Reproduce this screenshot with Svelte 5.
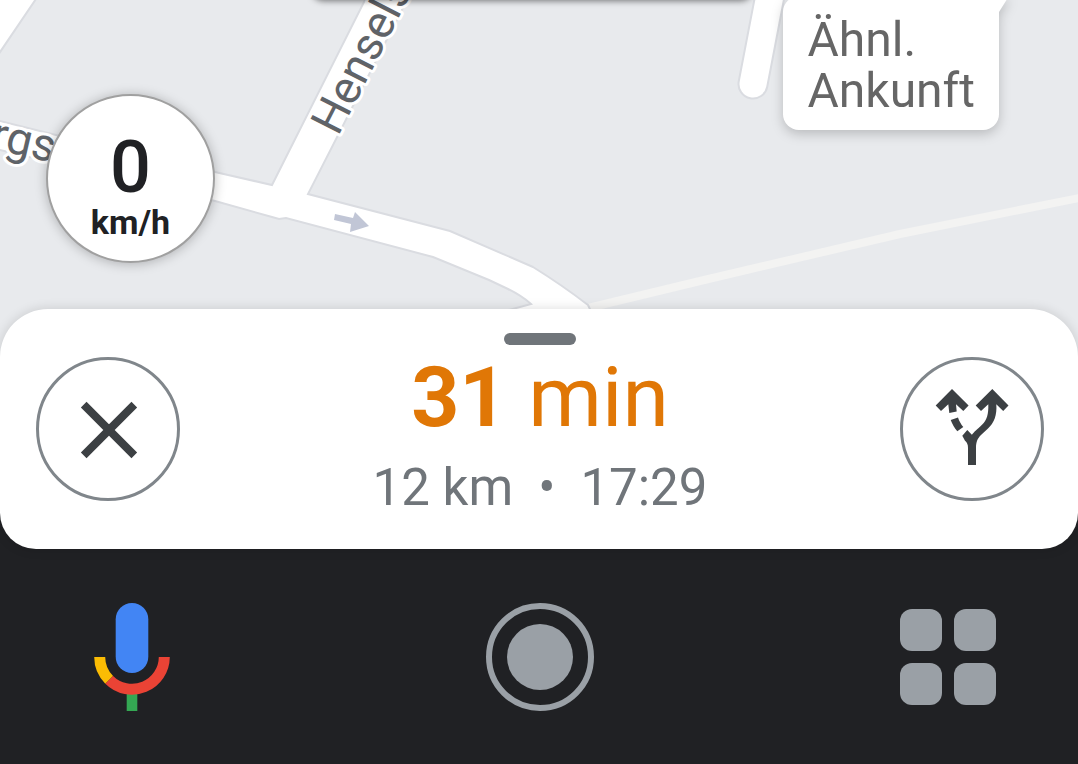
<script>
  const speed = { value: 0, unit: 'km/h' };
  const trip = { minutes: 31, distance: '12 km', arrival: '17:29' };
  const tiles = [[6, 6], [60, 6], [6, 60], [60, 60]];
</script>

<main class="screen">
  <section class="map" aria-label="Map">
    <svg class="streets" viewBox="0 0 1078 369" preserveAspectRatio="xMidYMax slice">
      <path class="path" d="M584 309 L700 281 L900 234 L1084 197" />
      <path class="road" d="M-4 -4 H38 L-4 58 Z" />
      <path
        class="road"
        d="M-4 120 L60 136 L215 172 L272 185 L367 -4 H409 L308 194 L450 231 L533 267 Q562 285 588 305 L600 330 H505 V311 L531 304 Q522 296 508 289 L489 280 L433 257 L286 218 L279 219 L272 217 L215 201 L-4 149 Z"
      />
      <path class="casing" d="M771 -10 L753 84" />
      <path class="lane" d="M771 -10 L753 84" />
      <path class="oneway" d="M335 214 L353 218 L355 212 L369 226 L350 232 L351 224 L334 220 Z" />
      <text class="street" transform="translate(338 137) rotate(-63)">Hensels</text>
      <text class="street" transform="translate(-11 148) rotate(13)">rgs</text>
    </svg>

    <div class="banner"></div>

    <div class="callout">
      <svg class="tail" viewBox="0 0 30 30"><path d="M0 0 H20 L10 16 V30 H0 Z" /></svg>
      <span>Ähnl.</span>
      <span>Ankunft</span>
    </div>

    <div class="speed">
      <span class="value">{speed.value}</span>
      <span class="unit">{speed.unit}</span>
    </div>
  </section>

  <section class="sheet">
    <button class="round" aria-label="Close">
      <svg viewBox="3 3 138 138">
        <path d="M47.7 47.7 L98.3 98.3 M98.3 47.7 L47.7 98.3" fill="none" stroke="#3c4043" stroke-width="8" />
      </svg>
    </button>

    <div class="trip">
      <div class="handle"></div>
      <div class="duration"><strong>{trip.minutes}</strong> min</div>
      <div class="details">
        <span>{trip.distance}</span><span class="dot">•</span><span>{trip.arrival}</span>
      </div>
    </div>

    <button class="round" aria-label="Alternative routes">
      <svg viewBox="3 3 138 138" fill="#3c4043">
        <path
          d="M92.3 32 L108.5 48.6 L103.2 54 L96.3 47.2 C97.2 58 94 66 88 71.5 L81 78 C77.5 81.5 76 85 76 91 V108 H68 V91 C68 87.5 67 85.5 65 83.8 L62.3 78.7 L67.3 73 L71.9 77.7 C74 75 77 72.5 82 67.8 C87 63 88.6 57 88.3 47.2 L81 54 L75.7 48.6 Z"
        />
        <path d="M52 32 L68.6 48.6 L63.3 54 L56 47.2 L56.7 54.6 L49.3 56 L48.3 47.2 L41 54 L35.7 48.6 Z" />
        <path d="M50.7 63 L58 60.4 C59.2 64 61 67.2 63.3 70 L57.3 74.2 C54.5 71 52.3 67.3 50.7 63 Z" />
      </svg>
    </button>
  </section>

  <nav class="dock">
    <button aria-label="Assistant">
      <svg viewBox="0 0 108 108">
        <rect x="37.7" y="0" width="32.6" height="70" rx="16.3" fill="#4285f4" />
        <rect x="48.7" y="90" width="10.6" height="18" fill="#34a853" />
        <g fill="none" stroke-width="11">
          <path d="M21.7 54 A32.3 32.3 0 0 0 31.2 76.8" stroke="#fbbc04" />
          <path d="M31.2 76.8 A32.3 32.3 0 0 0 86.3 54" stroke="#ea4335" />
        </g>
      </svg>
    </button>
    <button aria-label="Home">
      <svg viewBox="0 0 108 108">
        <circle cx="54" cy="54" r="51" fill="none" stroke="#9aa0a6" stroke-width="6" />
        <circle cx="54" cy="54" r="33" fill="#9aa0a6" />
      </svg>
    </button>
    <button aria-label="Apps">
      <svg viewBox="0 0 108 108" fill="#9aa0a6">
        {#each tiles as [x, y]}
          <rect {x} {y} width="42" height="42" rx="12" />
        {/each}
      </svg>
    </button>
  </nav>
</main>

<style>
  :global(body) {
    margin: 0;
  }
  .screen {
    display: flex;
    flex-direction: column;
    min-height: 100vh;
    font-family: Roboto, 'Liberation Sans', sans-serif;
    background: #202124;
  }
  button {
    padding: 0;
    border: 0;
    background: none;
    cursor: pointer;
  }
  svg {
    display: block;
  }

  .map {
    position: relative;
    flex: 1;
    min-height: 300px;
    margin-bottom: -60px;
    overflow: hidden;
    background: #e8eaed;
  }
  .streets {
    position: absolute;
    inset: 0;
    width: 100%;
    height: 100%;
  }
  .road {
    fill: #fff;
    stroke: #dadce1;
    stroke-width: 2;
  }
  .path {
    fill: none;
    stroke: #f3f3f2;
    stroke-width: 8;
  }
  .casing,
  .lane {
    fill: none;
    stroke: #dadce1;
    stroke-width: 31;
    stroke-linecap: round;
  }
  .lane {
    stroke: #fff;
    stroke-width: 27;
  }
  .oneway {
    fill: #c1c6d6;
  }
  .street {
    font-size: 46px;
    fill: #5f6368;
    stroke: #fff;
    stroke-width: 6;
    stroke-linejoin: round;
    paint-order: stroke;
  }
  .banner {
    position: absolute;
    top: -24px;
    left: 312px;
    right: 326px;
    height: 24px;
    border-radius: 16px;
    box-shadow: 0 0 6px 1px rgba(0, 0, 0, 0.5);
  }

  .callout {
    position: absolute;
    top: -4px;
    right: 79px;
    display: flex;
    flex-direction: column;
    padding: 18px 24px 14px 24px;
    border-radius: 16px;
    background: #fff;
    color: #666;
    font-size: 48px;
    line-height: 51px;
    filter: drop-shadow(0 4px 6px rgba(0, 0, 0, 0.2));
  }
  .tail {
    position: absolute;
    top: 0;
    right: -20px;
    width: 30px;
    height: 30px;
    fill: #fff;
  }

  .speed {
    position: absolute;
    left: 46px;
    bottom: 106px;
    box-sizing: border-box;
    width: 169px;
    height: 169px;
    padding-top: 36px;
    display: flex;
    flex-direction: column;
    align-items: center;
    border: 2px solid #a0a0a0;
    border-radius: 50%;
    background: #fff;
    color: #202124;
    box-shadow: 0 1px 12px rgba(0, 0, 0, 0.25);
    font-weight: 500;
  }
  .value {
    font-size: 72px;
    line-height: 72px;
  }
  .unit {
    font-size: 34px;
    line-height: 36px;
    font-weight: 700;
  }

  .sheet {
    position: relative;
    z-index: 1;
    display: flex;
    justify-content: space-between;
    align-items: flex-start;
    box-sizing: border-box;
    min-height: 240px;
    padding: 0 34px 0 36px;
    border-radius: 48px 48px 36px 36px;
    background: #fff;
    box-shadow: 0 0 12px rgba(0, 0, 0, 0.14);
  }
  .round {
    box-sizing: border-box;
    width: 144px;
    height: 144px;
    margin-top: 48px;
    border: 3px solid #80868b;
    border-radius: 50%;
  }
  .trip {
    display: flex;
    flex-direction: column;
    align-items: center;
    padding-top: 24px;
  }
  .handle {
    width: 72px;
    height: 12px;
    margin-bottom: 11px;
    border-radius: 6px;
    background: #70757a;
  }
  .duration {
    color: #e07706;
    font-size: 84px;
    line-height: 84px;
  }
  .duration strong {
    font-weight: 700;
  }
  .details {
    display: flex;
    gap: 25px;
    margin-top: 18px;
    color: #70757a;
    font-size: 51px;
    line-height: 60px;
  }

  .dock {
    display: flex;
    justify-content: space-between;
    margin-top: -36px;
    padding: 90px 76px 53px 78px;
    background: #202124;
  }
  .dock button {
    width: 108px;
    height: 108px;
  }
</style>
